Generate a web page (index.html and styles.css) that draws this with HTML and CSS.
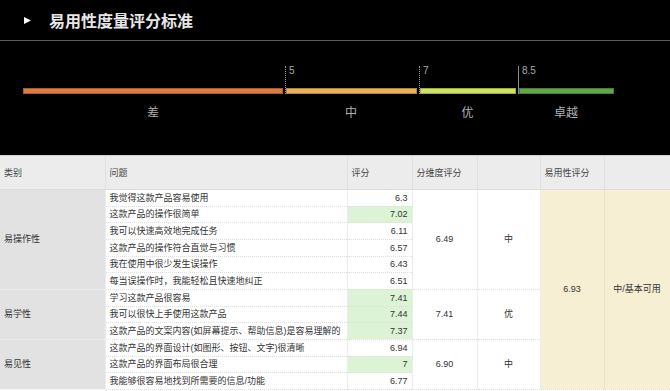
FILE: index.html
```html
<!DOCTYPE html>
<html lang="zh">
<head>
    <meta charset="UTF-8">
    <meta name="viewport" content="width=device-width, initial-scale=1.0">
    <title>易用性度量评分标准</title>
    <link rel="stylesheet" href="styles.css">
</head>
<body>
    <div class="panel">
        <div class="title-bar">
            <svg class="caret" width="7" height="7" viewBox="0 0 7 7"><polygon points="0,0 7,3.5 0,7" fill="#fff"/></svg>
            <h1>易用性度量评分标准</h1>
        </div>
        <div class="scale">
            <div class="seg seg-poor">
                <div class="seg-head">
                    <div class="tick"></div>
                    <div class="bar"></div>
                </div>
                <div class="seg-label">差</div>
            </div>
            <div class="seg seg-mid">
                <div class="seg-head dotted">
                    <div class="tick">5</div>
                    <div class="bar"></div>
                </div>
                <div class="seg-label">中</div>
            </div>
            <div class="seg seg-good">
                <div class="seg-head dotted">
                    <div class="tick">7</div>
                    <div class="bar"></div>
                </div>
                <div class="seg-label">优</div>
            </div>
            <div class="seg seg-best">
                <div class="seg-head solid">
                    <div class="tick">8.5</div>
                    <div class="bar"></div>
                </div>
                <div class="seg-label">卓越</div>
            </div>
        </div>
    </div>

    <table class="score-table">
        <colgroup>
            <col style="width:105px">
            <col style="width:242px">
            <col style="width:65px">
            <col style="width:65px">
            <col style="width:63px">
            <col style="width:64px">
            <col style="width:66px">
        </colgroup>
        <thead>
            <tr>
                <th>类别</th>
                <th>问题</th>
                <th>评分</th>
                <th>分维度评分</th>
                <th></th>
                <th>易用性评分</th>
                <th></th>
            </tr>
        </thead>
        <tbody>
            <tr>
                <td class="cat" rowspan="6">易操作性</td>
                <td>我觉得这款产品容易使用</td>
                <td class="num">6.3</td>
                <td class="center" rowspan="6">6.49</td>
                <td class="center" rowspan="6">中</td>
                <td class="total" rowspan="12">6.93</td>
                <td class="total" rowspan="12">中/基本可用</td>
            </tr>
            <tr><td>这款产品的操作很简单</td><td class="num hi">7.02</td></tr>
            <tr><td>我可以快速高效地完成任务</td><td class="num">6.11</td></tr>
            <tr><td>这款产品的操作符合直觉与习惯</td><td class="num">6.57</td></tr>
            <tr><td>我在使用中很少发生误操作</td><td class="num">6.43</td></tr>
            <tr><td>每当误操作时，我能轻松且快速地纠正</td><td class="num">6.51</td></tr>
            <tr>
                <td class="cat" rowspan="3">易学性</td>
                <td>学习这款产品很容易</td>
                <td class="num hi">7.41</td>
                <td class="center" rowspan="3">7.41</td>
                <td class="center" rowspan="3">优</td>
            </tr>
            <tr><td>我可以很快上手使用这款产品</td><td class="num hi">7.44</td></tr>
            <tr><td>这款产品的文案内容(如屏幕提示、帮助信息)是容易理解的</td><td class="num hi">7.37</td></tr>
            <tr>
                <td class="cat" rowspan="3">易见性</td>
                <td>这款产品的界面设计(如图形、按钮、文字)很清晰</td>
                <td class="num">6.94</td>
                <td class="center" rowspan="3">6.90</td>
                <td class="center" rowspan="3">中</td>
            </tr>
            <tr><td>这款产品的界面布局很合理</td><td class="num hi">7</td></tr>
            <tr><td>我能够很容易地找到所需要的信息/功能</td><td class="num">6.77</td></tr>
        </tbody>
    </table>
</body>
</html>
```

FILE: styles.css
```css
body {
    margin: 0;
    font-family: "Liberation Sans", "Noto Sans CJK SC", sans-serif;
    background: #fff;
}
.panel {
    background: #000;
    height: 155px;
    border-bottom: 1px solid #cfcfcf;
}
.title-bar {
    display: flex;
    align-items: center;
    height: 40px;
    padding-left: 24px;
    border-bottom: 1px solid #5a5a5a;
}
.caret {
    margin-right: 18px;
}
.title-bar h1 {
    margin: 0;
    font-size: 16px;
    font-weight: 600;
    color: #e6e6e6;
    letter-spacing: 0;
}
.scale {
    display: flex;
    padding: 25px 0 0 23px;
}
.seg {
    display: flex;
    flex-direction: column;
}
.seg-head {
    display: flex;
    flex-direction: column;
}
.seg-head.dotted {
    border-left: 1px dotted #9a9a9a;
}
.seg-head.solid {
    border-left: 1px solid #8a8a8a;
}
.tick {
    height: 22px;
    padding-left: 3px;
    font-size: 10px;
    line-height: 10px;
    color: #a8a8a8;
}
.bar {
    height: 6px;
    box-sizing: border-box;
    border: 1px solid rgba(0,0,0,0.25);
}
.seg-label {
    margin-top: 13px;
    text-align: center;
    font-size: 12px;
    line-height: 12px;
    color: #b0b0b0;
}
.seg-poor .bar { width: 260px; background: #e07a3e; }
.seg-mid { margin-left: 2px; }
.seg-mid .bar { width: 131px; background: #e8b457; }
.seg-good { margin-left: 2px; }
.seg-good .bar { width: 96px; background: #cfe35e; }
.seg-best { margin-left: 2px; }
.seg-best .bar { width: 95px; background: #5fa844; }

.score-table {
    width: 670px;
    table-layout: fixed;
    border-collapse: collapse;
    font-size: 9px;
    color: #333;
}
.score-table th {
    height: 33px;
    padding: 0 4px;
    text-align: left;
    font-weight: normal;
    color: #444;
    background: #ececec;
    border-right: 1px solid #e0e0e0;
    border-bottom: 1px solid #dcdcdc;
}
.score-table td {
    height: 16.67px;
    padding: 0 4px;
    box-sizing: border-box;
    white-space: nowrap;
    border-right: 1px solid #ececec;
    border-bottom: 1px dotted #dedede;
    line-height: 12px;
}
.score-table td.cat {
    background: #e2e2e2;
    border-bottom: 1px dotted #f4f4f4;
    color: #333;
}
.score-table td.num {
    text-align: right;
}
.score-table td.hi {
    background: #dcf3d6;
}
.score-table td.center {
    text-align: center;
}
.score-table td.total {
    text-align: center;
    background: #f7efd3;
    border-right: 1px solid #ece4c8;
}
```
